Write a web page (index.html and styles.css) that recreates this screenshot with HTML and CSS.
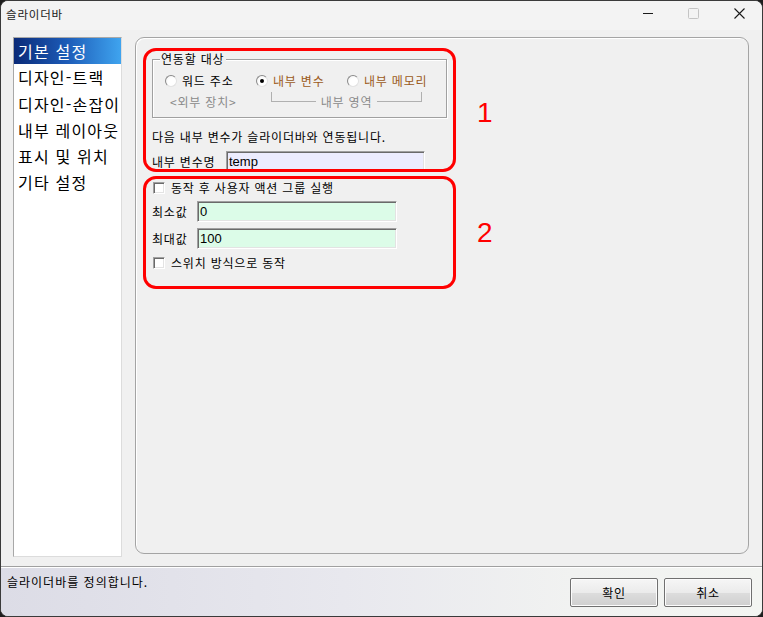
FILE: index.html
```html
<!DOCTYPE html>
<html lang="ko">
<head>
<meta charset="utf-8">
<title>슬라이더바</title>
<link rel="stylesheet" href="styles.css">
</head>
<body>
<div class="window">
  <div class="titlebar">
    <div class="title">슬라이더바</div>
    <div class="controls">
      <div class="ctl"><svg width="10" height="10" viewBox="0 0 10 10"><path d="M0 5.5H10" stroke="#1a1a1a" stroke-width="1"/></svg></div>
      <div class="ctl"><svg width="11" height="11" viewBox="0 0 11 11"><rect x="0.5" y="0.5" width="10" height="10" rx="1" fill="none" stroke="#c4c4c4" stroke-width="1"/></svg></div>
      <div class="ctl"><svg width="11" height="11" viewBox="0 0 11 11"><path d="M0.5 0.5L10.5 10.5M10.5 0.5L0.5 10.5" stroke="#1a1a1a" stroke-width="1.1"/></svg></div>
    </div>
  </div>

  <div class="main">
    <div class="list">
      <div class="item selected">기본 설정</div>
      <div class="item">디자인-트랙</div>
      <div class="item">디자인-손잡이</div>
      <div class="item">내부 레이아웃</div>
      <div class="item">표시 및 위치</div>
      <div class="item">기타 설정</div>
    </div>

    <div class="panel">
      <div class="annot-row">
        <div class="annot box1">
          <div class="group">
            <div class="legend">연동할 대상</div>
            <div class="radios">
              <div class="radio-item"><span class="radio"></span><span>워드 주소</span></div>
              <div class="radio-item"><span class="radio checked"><span class="dot"></span></span><span class="brown">내부 변수</span></div>
              <div class="radio-item"><span class="radio"></span><span class="brown">내부 메모리</span></div>
            </div>
            <div class="sub">
              <div class="ext">&lt;외부 장치&gt;</div>
              <div class="bracket">
                <div class="seg left"></div>
                <div class="bracket-text">내부 영역</div>
                <div class="seg right"></div>
              </div>
            </div>
          </div>
          <div class="desc">다음 내부 변수가 슬라이더바와 연동됩니다.</div>
          <div class="field">
            <div class="label varname">내부 변수명</div>
            <div class="input lavender varinput">temp</div>
          </div>
        </div>
        <div class="num num1">1</div>
      </div>

      <div class="annot-row">
        <div class="annot box2">
          <div class="check-row first">
            <span class="checkbox"></span><span>동작 후 사용자 액션 그룹 실행</span>
          </div>
          <div class="field f-min">
            <div class="label short">최소값</div>
            <div class="input mint numinput">0</div>
          </div>
          <div class="field f-max">
            <div class="label short">최대값</div>
            <div class="input mint numinput">100</div>
          </div>
          <div class="check-row second">
            <span class="checkbox"></span><span>스위치 방식으로 동작</span>
          </div>
        </div>
        <div class="num num2">2</div>
      </div>
    </div>
  </div>

  <div class="statusbar">
    <div class="status-text">슬라이더바를 정의합니다.</div>
    <div class="buttons">
      <div class="btn">확인</div>
      <div class="btn">취소</div>
    </div>
  </div>
</div>
</body>
</html>
```

FILE: styles.css
```css
* { box-sizing: border-box; }
html, body {
  margin: 0;
  padding: 0;
  background: #1e1e1e;
  width: 763px;
  height: 617px;
  overflow: hidden;
}
body {
  font-family: "Noto Sans CJK KR", "Noto Sans", sans-serif;
  font-size: 12px;
  letter-spacing: 0.8px;
  color: #000;
}
.window {
  width: 763px;
  height: 617px;
  border: 1px solid #3a3a3a;
  border-radius: 8px;
  background: #f0f0f0;
  display: flex;
  flex-direction: column;
  overflow: hidden;
}

/* title bar */
.titlebar {
  height: 29px;
  flex: none;
  display: flex;
  align-items: flex-start;
  background: #f3f3f3;
}
.title {
  padding: 5px 0 0 5px;
  font-size: 11.5px;
  line-height: 16px;
  color: #1a1a1a;
}
.controls {
  margin-left: auto;
  display: flex;
}
.ctl {
  width: 46px;
  height: 24px;
  display: flex;
  align-items: center;
  justify-content: center;
}
.controls .ctl:first-child { padding-left: 1px; }

/* main area */
.main {
  height: 536px;
  flex: none;
  display: flex;
  align-items: flex-start;
  padding: 7px 13px 0 12px;
  gap: 13px;
}
.list {
  width: 109px;
  height: 520px;
  flex: none;
  background: #fff;
  border: 1px solid #a8a8a8;
  border-right-color: #dcdcdc;
  border-bottom-color: #dcdcdc;
}
.item {
  height: 26.3px;
  line-height: 26px;
  padding-left: 4px;
  font-size: 16px;
  letter-spacing: 1.2px;
  white-space: nowrap;
  color: #000;
}
.item.selected {
  color: #fff;
  background: linear-gradient(to right, #0a2a78 0%, #1d5cb8 50%, #3fa4ef 100%);
}

.panel {
  flex: 1;
  height: 517px;
  border: 1px solid #a4a4a4;
  border-radius: 9px;
  box-shadow: inset 1px 1px 0 #fff;
  padding: 10px 0 0 7px;
}

.annot-row {
  display: flex;
  align-items: flex-start;
}
.annot-row + .annot-row { margin-top: 4px; }

.annot {
  position: relative;
  width: 313px;
  flex: none;
  padding-left: 9px;
}
.annot::after {
  content: "";
  position: absolute;
  inset: 0;
  border: 3px solid #ff0000;
  border-radius: 13px;
  pointer-events: none;
}
.box1 { height: 124px; padding-top: 11px; }
.box2 { height: 113px; padding-top: 4px; }

.num {
  margin-left: 21px;
  font-family: "Liberation Sans", Arial, sans-serif;
  font-size: 28px;
  line-height: 28px;
  letter-spacing: 0;
  color: #ff0000;
}
.num1 { margin-top: 51px; }
.num2 { margin-top: 43px; }

/* group box */
.group {
  width: 295px;
  height: 59px;
  border: 1px solid #a0a0a0;
  box-shadow: inset 1px 1px 0 #fff, 1px 1px 0 #fff;
}
.legend {
  width: fit-content;
  margin: -8px 0 0 7px;
  padding: 0 2px 0 1px;
  background: #f0f0f0;
  line-height: 14px;
}
.radios {
  display: flex;
  margin-top: 7px;
  padding-left: 12px;
  line-height: 16px;
}
.radio-item {
  display: flex;
  align-items: center;
  gap: 5px;
  width: 91px;
  flex: none;
  white-space: nowrap;
}
.radio {
  width: 12px;
  height: 12px;
  border-radius: 50%;
  background: radial-gradient(circle at 60% 60%, #fff 45%, #ececec 100%);
  border: 1px solid;
  border-color: #8a8a8a #e2e2e2 #e2e2e2 #8a8a8a;
  display: flex;
  align-items: center;
  justify-content: center;
  flex: none;
}
.dot {
  width: 4px;
  height: 4px;
  border-radius: 50%;
  background: #000;
}
.brown { color: #9b5a1a; }

.sub {
  display: flex;
  align-items: flex-start;
  margin-top: 3px;
  padding-left: 17px;
  color: #8a8a8a;
}
.ext {
  width: 101px;
  flex: none;
  margin-top: 2px;
  line-height: 16px;
}
.bracket {
  width: 151px;
  display: flex;
  align-items: flex-start;
}
.seg {
  flex: 1;
  height: 10px;
  border-bottom: 1px solid #b0b0b0;
}
.seg.left { border-left: 1px solid #b0b0b0; }
.seg.right { border-right: 1px solid #b0b0b0; }
.bracket-text {
  margin-top: 2px;
  padding: 0 5px;
  line-height: 16px;
  white-space: nowrap;
}

.desc {
  margin-top: 11px;
  line-height: 16px;
  white-space: nowrap;
}

/* fields */
.field {
  display: flex;
  align-items: center;
}
.field.f-min { margin-top: 5px; }
.field.f-max { margin-top: 6px; }
.box1 .field { margin-top: 6px; }
.label {
  flex: none;
  line-height: 16px;
  white-space: nowrap;
}
.label.varname { width: 74px; }
.label.short { width: 45px; }
.input {
  height: 21px;
  border: 1px solid;
  border-color: #a0a0a0 #fff #fff #a0a0a0;
  box-shadow: inset 1px 1px 0 #6a6a6a, inset -1px -1px 0 #e3e3e3;
  font-family: "Liberation Sans", Arial, sans-serif;
  font-size: 13px;
  letter-spacing: 0;
  line-height: 17px;
  padding: 1px 0 0 2px;
}
.lavender { background: #ececfe; }
.mint { background: #dcfce8; }
.varinput { width: 199px; }
.numinput { width: 200px; }

.check-row {
  display: flex;
  align-items: center;
  gap: 6px;
  line-height: 16px;
  padding-left: 1px;
  white-space: nowrap;
}
.check-row.second { margin-top: 6px; }
.checkbox {
  width: 12px;
  height: 12px;
  flex: none;
  background: #fff;
  border: 1px solid;
  border-color: #a0a0a0 #fff #fff #a0a0a0;
  box-shadow: inset 1px 1px 0 #6a6a6a, inset -1px -1px 0 #e3e3e3;
}

/* status bar */
.statusbar {
  flex: 1;
  display: flex;
  align-items: flex-start;
  border-top: 1px solid #a0a0a0;
  box-shadow: inset 0 1px 0 #fff;
  background: linear-gradient(to right, #dcdce6 0%, #e8e8ee 45%, #f1f2f1 75%, #f3f5f2 100%);
  padding: 0 10px 0 6px;
}
.status-text {
  margin-top: 7px;
  line-height: 16px;
  letter-spacing: 1px;
  white-space: nowrap;
}
.buttons {
  margin-left: auto;
  margin-top: 11px;
  display: flex;
  gap: 6px;
}
.btn {
  width: 88px;
  height: 29px;
  border: 1px solid #707070;
  border-radius: 2px;
  background: linear-gradient(to bottom, #f6f6f6 0%, #ebebeb 50%, #dddddd 51%, #cfcfcf 100%);
  box-shadow: inset 0 0 0 1px #fcfcfc;
  display: flex;
  align-items: center;
  justify-content: center;
  line-height: 16px;
}
```
